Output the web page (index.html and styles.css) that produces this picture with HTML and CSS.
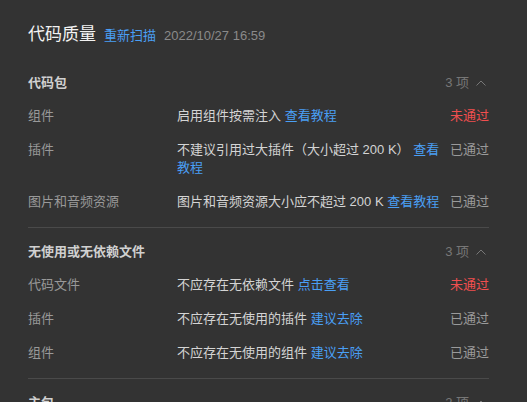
FILE: index.html
```html
<!DOCTYPE html>
<html lang="zh-CN">
<head>
  <meta charset="UTF-8" />
  <title>代码质量</title>
  <link rel="stylesheet" href="styles.css">
</head>
<body>
  <div class="page">
    <div class="title-row">
      <span class="title">代码质量</span>
      <a class="link rescan">重新扫描</a>
      <span class="date">2022/10/27 16:59</span>
    </div>

    <div class="group first">
      <div class="group-head">
        <span class="group-name">代码包</span>
        <span class="count">3 项
          <svg class="chev" width="10" height="6" viewBox="0 0 10 6"><polyline points="0.5,5.5 5,1 9.5,5.5" fill="none" stroke="currentColor" stroke-width="1"/></svg>
        </span>
      </div>
      <div class="rows">
        <div class="label">组件</div>
        <div class="desc">启用组件按需注入 <a class="link">查看教程</a></div>
        <div class="status fail">未通过</div>

        <div class="label">插件</div>
        <div class="desc">不建议引用过大插件（大小超过 200 K） <a class="link">查看教程</a></div>
        <div class="status">已通过</div>

        <div class="label">图片和音频资源</div>
        <div class="desc">图片和音频资源大小应不超过 200 K <a class="link">查看教程</a></div>
        <div class="status">已通过</div>
      </div>
    </div>

    <div class="group">
      <div class="group-head">
        <span class="group-name">无使用或无依赖文件</span>
        <span class="count">3 项
          <svg class="chev" width="10" height="6" viewBox="0 0 10 6"><polyline points="0.5,5.5 5,1 9.5,5.5" fill="none" stroke="currentColor" stroke-width="1"/></svg>
        </span>
      </div>
      <div class="rows">
        <div class="label">代码文件</div>
        <div class="desc">不应存在无依赖文件 <a class="link">点击查看</a></div>
        <div class="status fail">未通过</div>

        <div class="label">插件</div>
        <div class="desc">不应存在无使用的插件 <a class="link">建议去除</a></div>
        <div class="status">已通过</div>

        <div class="label">组件</div>
        <div class="desc">不应存在无使用的组件 <a class="link">建议去除</a></div>
        <div class="status">已通过</div>
      </div>
    </div>

    <div class="group">
      <div class="group-head">
        <span class="group-name">主包</span>
        <span class="count">2 项
          <svg class="chev" width="10" height="6" viewBox="0 0 10 6"><polyline points="0.5,5.5 5,1 9.5,5.5" fill="none" stroke="currentColor" stroke-width="1"/></svg>
        </span>
      </div>
    </div>
  </div>
</body>
</html>
```

FILE: styles.css
```css
html, body {
  margin: 0;
  padding: 0;
  background: #333333;
  overflow: hidden;
}

body {
  font-family: "Liberation Sans", "Noto Sans CJK SC", sans-serif;
  font-size: 13px;
  line-height: 18px;
  color: #d4d4d4;
}

.page {
  padding: 23px 38px 0 28px;
}

.title-row {
  display: flex;
  align-items: baseline;
  gap: 8px;
  margin-bottom: 27px;
}

.title {
  font-size: 17px;
  color: #f2f2f2;
  line-height: 24px;
}

.link {
  color: #4a9ff5;
  cursor: pointer;
}

.date {
  color: #8a8a8a;
}

.group {
  border-top: 1px solid #4a4a4a;
  padding: 15px 0 16px;
}

.group.first {
  border-top: none;
  padding-top: 0;
}

.group-head {
  display: flex;
  justify-content: space-between;
  align-items: center;
  margin-bottom: 15px;
}

.group-name {
  font-weight: bold;
  color: #d0d0d0;
}

.count {
  color: #777777;
  display: flex;
  align-items: center;
  gap: 7px;
  padding-right: 3px;
}

.rows {
  display: grid;
  grid-template-columns: 149px 1fr auto;
  row-gap: 16px;
}

.label {
  color: #999999;
}

.desc {
  padding-right: 8px;
}

.status {
  color: #9a9a9a;
  text-align: right;
}

.status.fail {
  color: #f04f4f;
}
```
